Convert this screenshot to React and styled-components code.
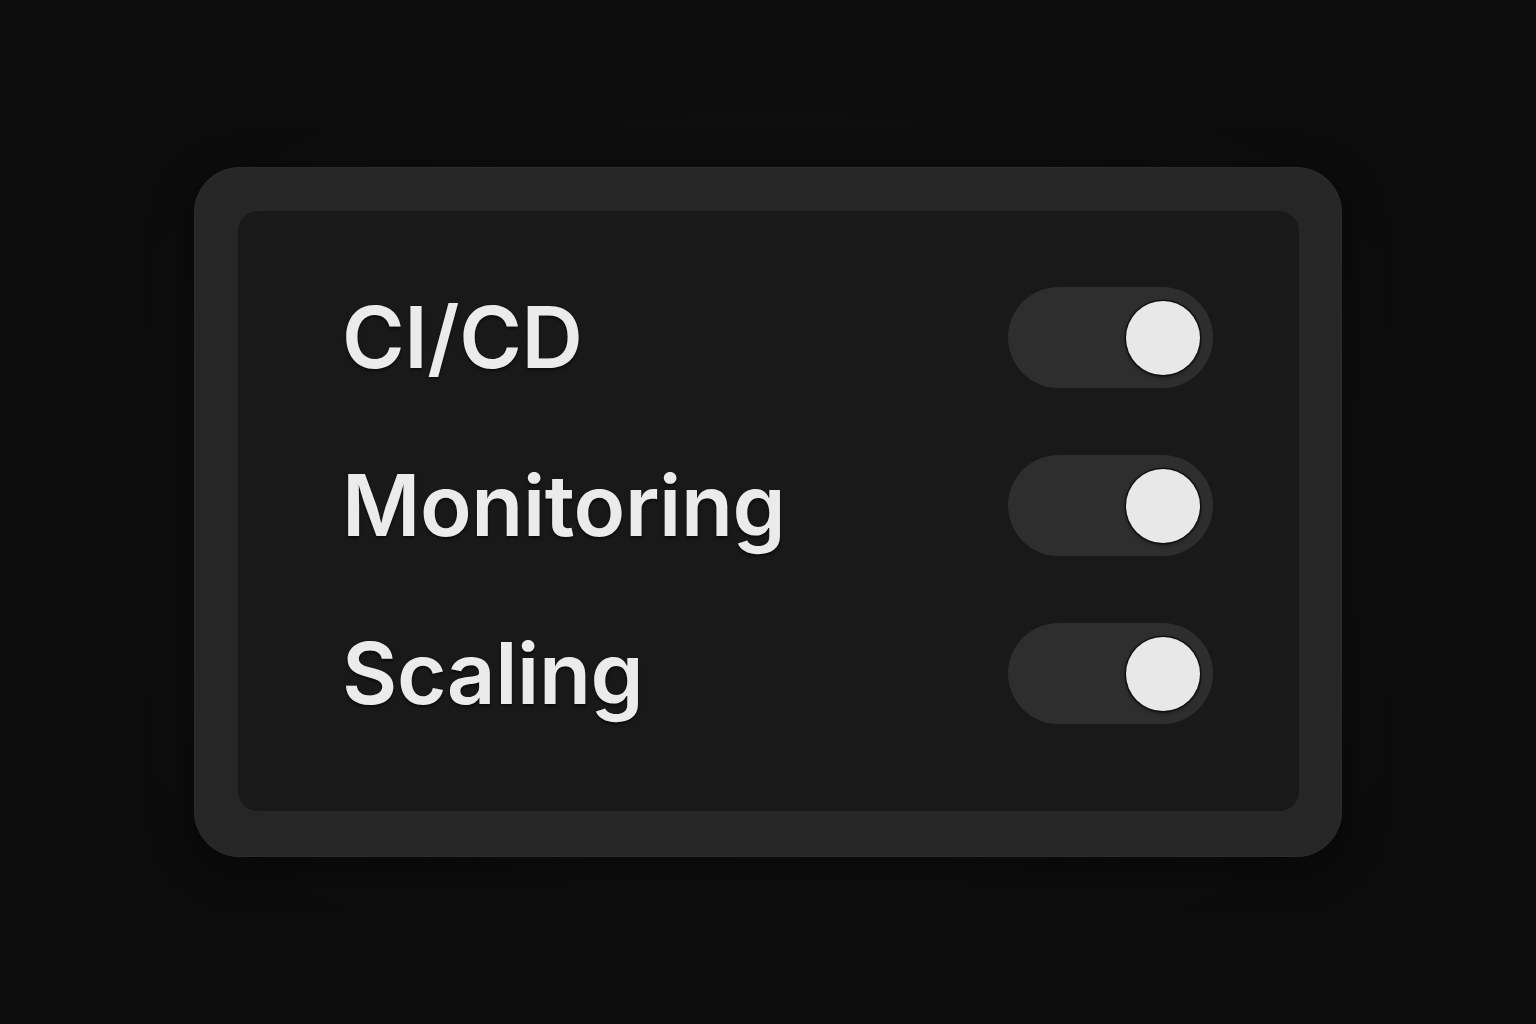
import React from "react";
import styled, { createGlobalStyle } from "styled-components";

const GlobalStyle = createGlobalStyle`
  html, body {
    margin: 0;
    padding: 0;
    background: #0d0d0d;
  }
  #root {
    min-height: 100vh;
  }
`;

const settings = [
  { label: "CI/CD", on: true },
  { label: "Monitoring", on: true },
  { label: "Scaling", on: true },
];

export default function App() {
  return (
    <>
      <GlobalStyle />
      <Page>
        <Frame>
          <Panel>
            {settings.map(item => (
              <Row key={item.label}>
                <Label>{item.label}</Label>
                <Toggle on={item.on}>
                  <Knob />
                </Toggle>
              </Row>
            ))}
          </Panel>
        </Frame>
      </Page>
    </>
  );
}

const Page = styled.div`
  width: 1536px;
  height: 1024px;
  display: flex;
  align-items: center;
  justify-content: center;
  background: radial-gradient(ellipse at center, #121212 0%, #0c0c0c 70%);
`;

const Frame = styled.div`
  width: 1148px;
  height: 690px;
  box-sizing: border-box;
  padding: 44px 43px 46px 44px;
  background: #262626;
  border-radius: 46px;
  box-shadow: 0 0 0 1px #2c2c2c inset, 0 10px 40px rgba(0, 0, 0, 0.4);
  display: flex;
`;

const Panel = styled.div`
  flex: 1;
  background: #191919;
  border-radius: 20px;
  box-sizing: border-box;
  padding: 76px 86px 88px 104px;
  display: flex;
  flex-direction: column;
  gap: 67px;
`;

const Row = styled.div`
  display: flex;
  align-items: center;
  justify-content: space-between;
  height: 101px;
`;

const Label = styled.span`
  font-family: Inter, "Noto Sans", sans-serif;
  font-size: 85px;
  font-weight: 600;
  color: #ebebeb;
  letter-spacing: -0.4px;
  text-shadow: 0 2px 3px rgba(0, 0, 0, 0.6);
  line-height: 1;
`;

const Toggle = styled.div`
  width: 205px;
  height: 101px;
  box-sizing: border-box;
  border-radius: 51px;
  background: #2e2e2e;
  display: flex;
  align-items: center;
  justify-content: ${props => (props.on ? "flex-end" : "flex-start")};
  padding: 0 13px;
`;

const Knob = styled.div`
  width: 74px;
  height: 74px;
  border-radius: 50%;
  background: #e8e8e8;
  box-shadow: 0 0 0 1.5px #111, 0 2px 4px rgba(0, 0, 0, 0.5);
`;
